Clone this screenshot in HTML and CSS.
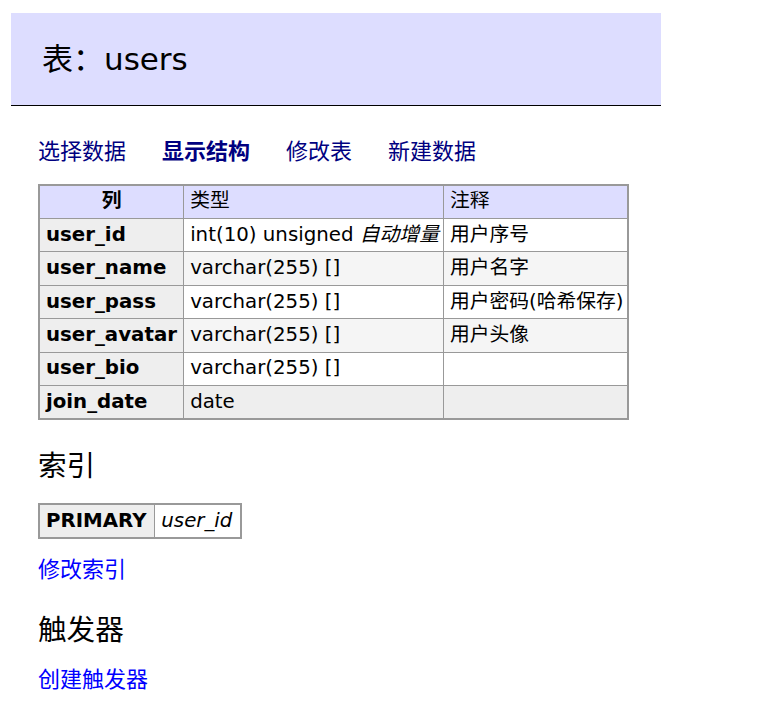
FILE: index.html
```html
<!DOCTYPE html>
<html lang="zh">
<head>
<meta charset="utf-8">
<title>表：users</title>
<link rel="stylesheet" href="styles.css">
</head>
<body>
<h2 class="title">表：users</h2>
<div class="content">
  <nav class="links">
    <a class="nav-link" href="#select">选择数据</a>
    <a class="nav-link active" href="#structure">显示结构</a>
    <a class="nav-link" href="#alter">修改表</a>
    <a class="nav-link" href="#new">新建数据</a>
  </nav>

  <table class="grid structure">
    <colgroup>
      <col class="c1"><col class="c2"><col class="c3">
    </colgroup>
    <thead>
      <tr><th class="center">列</th><td>类型</td><td>注释</td></tr>
    </thead>
    <tbody>
      <tr><th>user_id</th><td>int(10) unsigned <i>自动增量</i></td><td>用户序号</td></tr>
      <tr><th>user_name</th><td>varchar(255) []</td><td>用户名字</td></tr>
      <tr><th>user_pass</th><td>varchar(255) []</td><td>用户密码(哈希保存)</td></tr>
      <tr><th>user_avatar</th><td>varchar(255) []</td><td>用户头像</td></tr>
      <tr><th>user_bio</th><td>varchar(255) []</td><td></td></tr>
      <tr class="hover"><th>join_date</th><td>date</td><td></td></tr>
    </tbody>
  </table>

  <h3 class="section">索引</h3>
  <table class="grid indexes">
    <colgroup>
      <col class="i1"><col class="i2">
    </colgroup>
    <tbody>
      <tr><th>PRIMARY</th><td><i>user_id</i></td></tr>
    </tbody>
  </table>
  <p class="action"><a class="blue" href="#indexes">修改索引</a></p>

  <h3 class="section">触发器</h3>
  <p class="action"><a class="blue" href="#trigger">创建触发器</a></p>
</div>
</body>
</html>
```

FILE: styles.css
```css
html, body {
  margin: 0;
  padding: 0;
  background: #fff;
}
body {
  font-family: "DejaVu Sans", Verdana, "Noto Sans CJK SC", sans-serif;
  font-size: 22px;
  line-height: 1.25;
  color: #000;
}
.title {
  box-sizing: border-box;
  width: 650px;
  margin: 13px 0 0 11px;
  padding: 24px 31px;
  font-size: 31px;
  line-height: 44px;
  font-weight: normal;
  background: #ddf;
  border-bottom: 1px solid #000;
}
.content {
  margin-left: 38px;
}
.links {
  display: flex;
  gap: 36px;
  margin-top: 32px;
}
.nav-link {
  color: #000080;
  text-decoration: none;
}
.nav-link.active {
  font-weight: bold;
}
.grid {
  border-collapse: collapse;
  border: 2px solid #999;
  font-size: 19.8px;
  line-height: 24.5px;
}
.grid th, .grid td {
  border: 1px solid #999;
  padding: 0.2em 0.3em;
  text-align: left;
  white-space: nowrap;
  vertical-align: top;
}
.structure td {
  padding-right: 3px;
}
.grid thead th, .grid thead td {
  background: #ddf;
}
.grid thead td {
  font-weight: normal;
}
.grid .center {
  text-align: center;
}
.grid tbody th {
  background: #eee;
  font-weight: bold;
}
.grid tbody td {
  background: #fff;
}
.structure tbody tr:nth-child(2n) td {
  background: #f5f5f5;
}
.structure tbody tr.hover td {
  background: #eee;
}
.structure {
  width: 591px;
  margin-top: 18px;
}
.structure .c1 { width: 145px; }
.structure .c2 { width: 261px; }
.structure .c3 { width: 185px; }
.indexes {
  width: 204px;
  margin-top: 18px;
}
.indexes .i1 { width: 117px; }
.indexes .i2 { width: 87px; }
.section {
  font-size: 28.6px;
  line-height: 1.25;
  font-weight: normal;
  margin: 29px 0 0;
}
.action {
  margin: 17px 0 0;
}
.blue {
  color: #00f;
  text-decoration: none;
}
```
